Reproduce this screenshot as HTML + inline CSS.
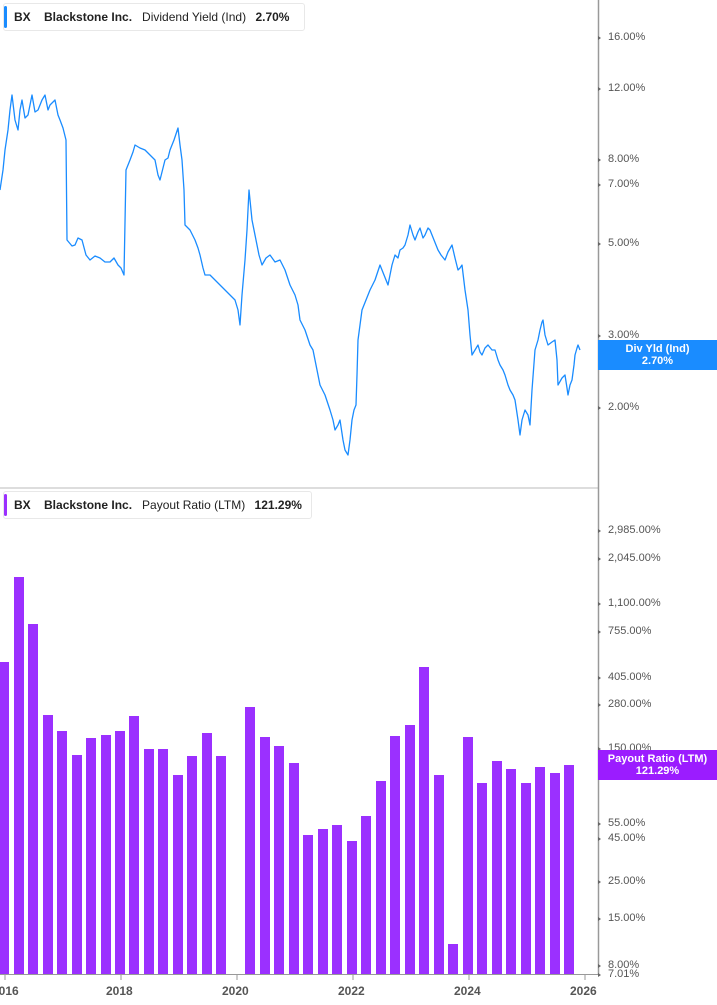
<!DOCTYPE html><html><head><style>
body{margin:0;width:717px;height:1005px;background:#fff;position:relative;overflow:hidden;font-family:"Liberation Sans",sans-serif}
.lg{position:absolute;left:3px;height:26px;border:1px solid #e8e8e8;border-radius:3px;background:#fff;font-size:12px;font-weight:bold;color:#222;line-height:26px;padding-left:10px;white-space:nowrap}
.lg i{position:absolute;left:0;top:2px;width:3px;height:22px;border-radius:2px}
.lg span{font-weight:normal;margin-left:10px}
.yl{position:absolute;left:601px;font-size:11px;color:#555;line-height:12px}
.yl:before{content:"";position:absolute;left:-3px;top:5px;border-left:3px solid #666;border-top:2px solid transparent;border-bottom:2px solid transparent}
.yl{padding-left:7px}
.tag{position:absolute;left:598px;width:119px;color:#fff;font-size:11px;font-weight:bold;text-align:center;line-height:12px;padding-top:3px}
.xl{position:absolute;top:984px;font-size:12px;font-weight:bold;color:#555}
</style></head><body>
<svg width="717" height="1005" style="position:absolute;left:0;top:0">
<line x1="0" y1="488" x2="598" y2="488" stroke="#ddd" stroke-width="2"/>
<line x1="598.5" y1="0" x2="598.5" y2="975" stroke="#999" stroke-width="1.5"/>
<line x1="0" y1="974.5" x2="598" y2="974.5" stroke="#999" stroke-width="1"/>
<polyline fill="none" stroke="#1a8cff" stroke-width="1.3" stroke-linejoin="round" points="0,190 3,170 5,150 8,130 10,110 12,95 15,120 18,130 20,110 22,100 25,118 28,115 32,95 35,112 38,110 42,100 45,95 48,110 50,105 55,100 58,115 60,120 63,128 66,140 67,240 72,246 75,245 78,238 82,240 86,255 90,260 95,256 100,258 105,262 110,262 114,258 118,265 121,268 124,275 126,170 130,160 133,152 135,145 140,148 145,150 150,155 155,160 158,175 160,180 163,168 165,160 168,158 170,150 174,140 178,128 180,145 182,160 184,190 185,225 190,230 195,240 198,248 200,255 203,268 205,275 210,275 215,280 220,285 225,290 230,295 235,300 238,310 240,325 242,295 245,260 247,230 249,190 251,210 252,220 256,240 259,255 262,265 266,258 270,255 275,262 280,260 285,270 290,285 295,295 298,305 300,320 305,330 310,345 313,350 315,360 318,375 320,385 325,395 330,410 333,420 335,430 338,425 340,420 343,440 345,450 348,455 350,440 352,420 354,410 356,405 357,375 358,340 360,325 362,310 366,300 370,290 375,280 380,265 384,275 388,285 392,265 395,255 398,258 400,250 403,248 405,245 408,235 410,225 413,235 415,240 418,232 420,228 423,238 425,235 428,228 430,230 434,240 438,250 441,255 445,260 448,252 452,245 455,258 458,270 460,268 462,265 465,290 468,310 470,335 472,355 475,350 478,345 480,352 482,355 485,348 488,345 492,350 495,350 498,360 500,365 503,370 505,375 508,385 510,390 513,395 515,400 518,420 520,435 522,420 525,410 528,415 530,425 532,390 535,350 538,340 540,330 542,322 543,320 545,335 548,345 552,342 555,340 557,360 558,385 562,378 565,375 567,388 568,395 570,385 572,380 574,365 575,355 577,348 578,345 580,350"/>
<g fill="#9b30ff">
<rect x="0" y="662" width="9" height="312"/>
<rect x="14" y="577" width="10" height="397"/>
<rect x="28" y="624" width="10" height="350"/>
<rect x="43" y="715" width="10" height="259"/>
<rect x="57" y="731" width="10" height="243"/>
<rect x="72" y="755" width="10" height="219"/>
<rect x="86" y="738" width="10" height="236"/>
<rect x="101" y="735" width="10" height="239"/>
<rect x="115" y="731" width="10" height="243"/>
<rect x="129" y="716" width="10" height="258"/>
<rect x="144" y="749" width="10" height="225"/>
<rect x="158" y="749" width="10" height="225"/>
<rect x="173" y="775" width="10" height="199"/>
<rect x="187" y="756" width="10" height="218"/>
<rect x="202" y="733" width="10" height="241"/>
<rect x="216" y="756" width="10" height="218"/>
<rect x="245" y="707" width="10" height="267"/>
<rect x="260" y="737" width="10" height="237"/>
<rect x="274" y="746" width="10" height="228"/>
<rect x="289" y="763" width="10" height="211"/>
<rect x="303" y="835" width="10" height="139"/>
<rect x="318" y="829" width="10" height="145"/>
<rect x="332" y="825" width="10" height="149"/>
<rect x="347" y="841" width="10" height="133"/>
<rect x="361" y="816" width="10" height="158"/>
<rect x="376" y="781" width="10" height="193"/>
<rect x="390" y="736" width="10" height="238"/>
<rect x="405" y="725" width="10" height="249"/>
<rect x="419" y="667" width="10" height="307"/>
<rect x="434" y="775" width="10" height="199"/>
<rect x="448" y="944" width="10" height="30"/>
<rect x="463" y="737" width="10" height="237"/>
<rect x="477" y="783" width="10" height="191"/>
<rect x="492" y="761" width="10" height="213"/>
<rect x="506" y="769" width="10" height="205"/>
<rect x="521" y="783" width="10" height="191"/>
<rect x="535" y="767" width="10" height="207"/>
<rect x="550" y="773" width="10" height="201"/>
<rect x="564" y="765" width="10" height="209"/>
</g>
<g stroke="#999"><line x1="5" y1="975" x2="5" y2="980"/><line x1="121" y1="975" x2="121" y2="980"/><line x1="237" y1="975" x2="237" y2="980"/><line x1="353" y1="975" x2="353" y2="980"/><line x1="469" y1="975" x2="469" y2="980"/><line x1="585" y1="975" x2="585" y2="980"/></g>
</svg>
<div class="lg" style="top:3px;width:290px"><i style="background:#1a8cff"></i>BX <span style="font-weight:bold">Blackstone Inc.</span><span>Dividend Yield (Ind)</span> <span style="font-weight:bold;margin-left:6px">2.70%</span></div>
<div class="lg" style="top:491px;width:297px"><i style="background:#9b30ff"></i>BX <span style="font-weight:bold">Blackstone Inc.</span><span>Payout Ratio (LTM)</span> <span style="font-weight:bold;margin-left:6px">121.29%</span></div>
<div class="yl" style="top:31px">16.00%</div>
<div class="yl" style="top:82px">12.00%</div>
<div class="yl" style="top:153px">8.00%</div>
<div class="yl" style="top:178px">7.00%</div>
<div class="yl" style="top:237px">5.00%</div>
<div class="yl" style="top:329px">3.00%</div>
<div class="yl" style="top:401px">2.00%</div>
<div class="tag" style="top:340px;height:27px;background:#1a8cff">Div Yld (Ind)<br>2.70%</div>
<div class="yl" style="top:524px">2,985.00%</div>
<div class="yl" style="top:552px">2,045.00%</div>
<div class="yl" style="top:597px">1,100.00%</div>
<div class="yl" style="top:625px">755.00%</div>
<div class="yl" style="top:671px">405.00%</div>
<div class="yl" style="top:698px">280.00%</div>
<div class="yl" style="top:742px">150.00%</div>
<div class="yl" style="top:817px">55.00%</div>
<div class="yl" style="top:832px">45.00%</div>
<div class="yl" style="top:875px">25.00%</div>
<div class="yl" style="top:912px">15.00%</div>
<div class="yl" style="top:959px">8.00%</div>
<div class="yl" style="top:968px">7.01%</div>
<div class="tag" style="top:750px;height:27px;background:#9b1cff">Payout Ratio (LTM)<br>121.29%</div>
<div class="xl" style="left:-8px">2016</div>
<div class="xl" style="left:106px">2018</div>
<div class="xl" style="left:222px">2020</div>
<div class="xl" style="left:338px">2022</div>
<div class="xl" style="left:454px">2024</div>
<div class="xl" style="left:570px">2026</div>
</body></html>
